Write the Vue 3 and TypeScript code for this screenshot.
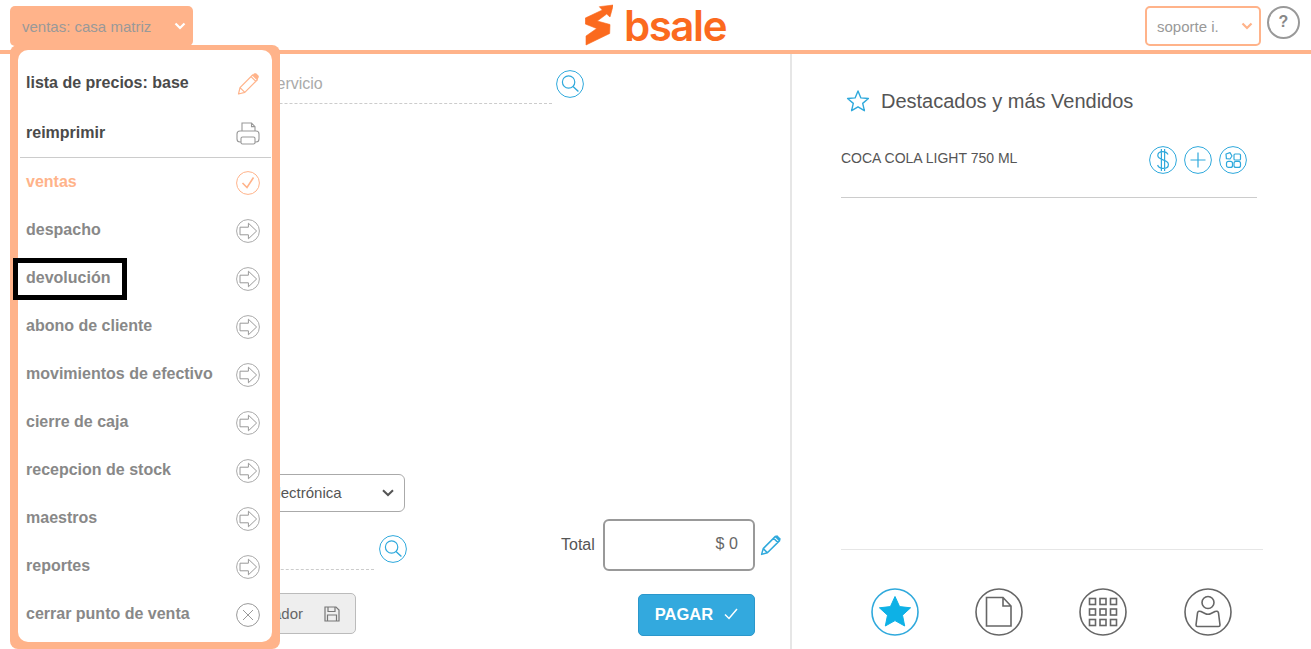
<template>
  <div class="pos">
    <header class="topbar">
      <div class="topbar-left">
        <button class="branch-btn">
          <span>ventas: casa matriz</span>
          <svg class="chev" viewBox="0 0 12 8" width="12" height="8">
            <path d="M1.5 1.5 L6 6 L10.5 1.5" fill="none" stroke="#fff" stroke-width="2.2" />
          </svg>
        </button>
      </div>
      <div class="logo">
        <svg viewBox="0 0 28 42" width="28" height="42">
          <path
            d="M14.3 2.7 L28.3 1 L25 13 L21.7 10 L12.3 17 L25 20.5 L24.7 29.5 L1 41 L1 32 L11.7 24.5 L0.3 20 L0.3 14 L17.3 6 Z"
            fill="#fb6a1e"
            stroke="#fb6a1e"
            stroke-width="0.6"
            stroke-linejoin="round"
          />
        </svg>
        <span class="logo-text">bsale</span>
      </div>
      <div class="topbar-right">
        <div class="user-select">
          <span>soporte i.</span>
          <svg viewBox="0 0 12 8" width="12" height="8">
            <path d="M1.5 1.5 L6 6 L10.5 1.5" fill="none" stroke="#ffb38a" stroke-width="2.2" />
          </svg>
        </div>
        <div class="help">?</div>
      </div>
    </header>

    <main class="body">
      <section class="sale">
        <div class="search-row">
          <input class="search-input" placeholder="buscar producto o servicio" readonly />
          <svg class="round-icon" viewBox="0 0 28 28" width="28" height="28">
            <circle cx="14" cy="14" r="13.4" fill="none" stroke="#2fa9dc" />
            <circle cx="12.6" cy="12" r="6.2" fill="none" stroke="#2fa9dc" stroke-width="1.2" />
            <path d="M17 16.6 L22.4 21.6" stroke="#2fa9dc" stroke-width="1.4" />
          </svg>
        </div>

        <div class="sale-bottom">
          <div class="doc-col">
            <div class="doc-select">
              <span class="doc-name">boleta electrónica</span>
              <svg viewBox="0 0 12 8" width="12" height="8">
                <path d="M1 1.2 L6 6 L11 1.2" fill="none" stroke="#555" stroke-width="2" />
              </svg>
            </div>
            <div class="client-row">
              <div class="client-input"></div>
              <svg class="round-icon" viewBox="0 0 28 28" width="28" height="28">
                <circle cx="14" cy="14" r="13.4" fill="none" stroke="#2fa9dc" />
                <circle cx="12.6" cy="12" r="6.2" fill="none" stroke="#2fa9dc" stroke-width="1.2" />
                <path d="M17 16.6 L22.4 21.6" stroke="#2fa9dc" stroke-width="1.4" />
              </svg>
            </div>
            <button class="save-btn">
              <span>comprador</span>
              <svg viewBox="0 0 16 16" width="16" height="16">
                <path d="M1 1 H12 L15 4 V15 H1 Z" fill="#eee" stroke="#777" stroke-width="1.2" />
                <path d="M4 1 V5.5 H11 V1 M3.5 15 V9 H12.5 V15" fill="none" stroke="#777" stroke-width="1.2" />
              </svg>
            </button>
          </div>

          <div class="pay-col">
            <div class="total-row">
              <span class="total-label">Total</span>
              <div class="total-box">$ 0</div>
              <svg class="total-pencil" viewBox="0 0 22 22" width="22" height="22">
                <path d="M1.6 20.4 L3.2 14.6 L15.4 2.4 L19.6 6.6 L7.4 18.8 Z M3.2 14.6 L7.4 18.8 M13.6 4.2 L17.8 8.4" fill="none" stroke="#2fa9dc" stroke-width="1.5" stroke-linejoin="round" />
                <path d="M15.4 2.4 L17 0.9 L21 5 L19.6 6.6 Z" fill="#2fa9dc" />
              </svg>
            </div>
            <button class="pay-btn">
              <span>PAGAR</span>
              <svg viewBox="0 0 14 12" width="14" height="12">
                <path d="M1 6.5 L5 10.5 L13 1" fill="none" stroke="#fff" stroke-width="1.5" />
              </svg>
            </button>
          </div>
        </div>
      </section>

      <section class="side">
        <div class="side-title">
          <svg viewBox="0 0 24 24" width="24" height="24">
            <path d="M12 2 L14.9 8.9 L22.4 9.5 L16.7 14.4 L18.4 21.7 L12 17.8 L5.6 21.7 L7.3 14.4 L1.6 9.5 L9.1 8.9 Z" fill="none" stroke="#2fa9dc" stroke-width="1.4" stroke-linejoin="round" />
          </svg>
          <h2>Destacados y más Vendidos</h2>
        </div>

        <div class="product">
          <span class="product-name">COCA COLA LIGHT 750 ML</span>
          <div class="product-actions">
            <svg viewBox="0 0 28 28" width="28" height="28">
              <circle cx="14" cy="14" r="13.4" fill="none" stroke="#2fa9dc" />
              <path d="M19 8.6 C18 6.2 15.8 5.6 13.8 5.6 C10.8 5.6 8.8 7.2 8.8 9.6 C8.8 15 19.4 12.6 19.4 18.4 C19.4 21 17 22.4 14 22.4 C11.4 22.4 9.4 21.2 8.6 19 M12.4 3 V25 M15.6 3 V25" fill="none" stroke="#2fa9dc" stroke-width="1.2" />
            </svg>
            <svg viewBox="0 0 28 28" width="28" height="28">
              <circle cx="14" cy="14" r="13.4" fill="none" stroke="#2fa9dc" />
              <path d="M14 6.5 V21.5 M6.5 14 H21.5" stroke="#2fa9dc" stroke-width="1.2" />
            </svg>
            <svg viewBox="0 0 28 28" width="28" height="28">
              <circle cx="14" cy="14" r="13.4" fill="none" stroke="#2fa9dc" />
              <path d="M7 8 L11 6.6 L13 10 L11 13 L7.4 12.6 Z" fill="none" stroke="#2fa9dc" stroke-width="1.2" stroke-linejoin="round" />
              <rect x="15" y="8" width="6.5" height="6" rx="1" fill="none" stroke="#2fa9dc" stroke-width="1.2" />
              <rect x="7.5" y="15.4" width="6" height="6" rx="2" fill="none" stroke="#2fa9dc" stroke-width="1.2" />
              <rect x="15" y="15.4" width="6.5" height="6" rx="2" fill="none" stroke="#2fa9dc" stroke-width="1.2" />
            </svg>
          </div>
        </div>

        <nav class="side-nav">
          <svg viewBox="0 0 48 48" width="48" height="48">
            <circle cx="24" cy="24" r="23" fill="none" stroke="#2fa9dc" stroke-width="1.6" />
            <path d="M24 8.5 L28.6 18.6 L39.6 19.8 L31.5 27.2 L33.7 38 L24 32.6 L14.3 38 L16.5 27.2 L8.4 19.8 L19.4 18.6 Z" fill="#0db1e6" stroke="#0db1e6" stroke-linejoin="round" />
          </svg>
          <svg viewBox="0 0 48 48" width="48" height="48">
            <circle cx="24" cy="24" r="23" fill="none" stroke="#666" stroke-width="1.6" />
            <path d="M11.5 9.5 H28 L36 18 V38 H11.5 Z M28 9.5 V18 H36" fill="none" stroke="#666" stroke-width="1.6" />
          </svg>
          <svg viewBox="0 0 48 48" width="48" height="48">
            <circle cx="24" cy="24" r="23" fill="none" stroke="#666" stroke-width="1.6" />
            <g fill="none" stroke="#666" stroke-width="1.6">
              <rect v-for="c in gridCells" :key="c.k" :x="c.x" :y="c.y" width="6" height="6" />
            </g>
          </svg>
          <svg viewBox="0 0 48 48" width="48" height="48">
            <circle cx="24" cy="24" r="23" fill="none" stroke="#666" stroke-width="1.6" />
            <circle cx="24" cy="14.5" r="6" fill="none" stroke="#666" stroke-width="1.6" />
            <path d="M13.5 25 C14 23 15.5 23 17 23.5 L21 25.5 C23 26.5 25 26.5 27 25.5 L31 23.5 C32.5 23 34 23 34.5 25 L36 37 C36 38 35.5 38.5 34.5 38.5 H13.5 C12.5 38.5 12 38 12 37 Z" fill="none" stroke="#666" stroke-width="1.6" stroke-linejoin="round" />
          </svg>
        </nav>
      </section>
    </main>

    <aside class="menu">
      <div class="menu-inner">
        <div v-for="item in menuItems" :key="item.label" class="menu-item" :class="item.kind">
          <span>{{ item.label }}</span>
          <svg v-if="item.icon === 'pencil'" viewBox="0 0 24 24" width="24" height="24">
            <path d="M2.5 22 L4 15.6 L16.6 3 L21.4 7.8 L8.8 20.4 Z M4 15.6 L8.8 20.4 M15 4.6 L19.8 9.4" fill="none" stroke="#ffb38a" stroke-width="1.2" stroke-linejoin="round" />
            <path d="M16.6 3 L18 1.6 C18.8 1 19.6 1 20.4 1.6 L22.4 3.6 C23 4.4 23 5.2 22.4 6 L21.4 7.8 Z" fill="#ffb38a" />
          </svg>
          <svg v-else-if="item.icon === 'print'" viewBox="0 0 24 24" width="24" height="24">
            <path d="M6 11 V1 H15.5 L19 4.6 V11 M15.5 1 V4.6 H19" fill="none" stroke="#999" stroke-width="1.1" />
            <rect x="1" y="9" width="22" height="11" rx="3" fill="#fff" stroke="#999" stroke-width="1.1" />
            <rect x="5" y="15" width="14" height="7" rx="1.6" fill="#fff" stroke="#999" stroke-width="1.1" />
          </svg>
          <svg v-else-if="item.icon === 'check'" viewBox="0 0 24 24" width="24" height="24">
            <circle cx="12" cy="12" r="11.4" fill="none" stroke="#ffb38a" />
            <path d="M6.5 12 L11 16.5 L17.5 6.5" fill="none" stroke="#ffb38a" stroke-width="1.6" />
          </svg>
          <svg v-else-if="item.icon === 'arrow'" viewBox="0 0 24 24" width="24" height="24">
            <circle cx="12" cy="12" r="11.4" fill="none" stroke="#aaa" />
            <path d="M4 8.2 H12.4 V4.2 L20.6 12 L12.4 19.8 V15.8 H4 Z" fill="none" stroke="#999" stroke-linejoin="round" />
          </svg>
          <svg v-else viewBox="0 0 24 24" width="24" height="24">
            <circle cx="12" cy="12" r="11.4" fill="none" stroke="#999" />
            <path d="M7 7 L17 17 M17 7 L7 17" stroke="#999" />
          </svg>
        </div>
      </div>
    </aside>

    <div class="focus-box"></div>
  </div>
</template>

<script setup lang="ts">
interface MenuItem {
  label: string
  icon: 'pencil' | 'print' | 'check' | 'arrow' | 'close'
  kind: string
}

const menuItems: MenuItem[] = [
  { label: 'lista de precios: base', icon: 'pencil', kind: 'tool' },
  { label: 'reimprimir', icon: 'print', kind: 'tool last-tool' },
  { label: 'ventas', icon: 'check', kind: 'current' },
  { label: 'despacho', icon: 'arrow', kind: '' },
  { label: 'devolución', icon: 'arrow', kind: '' },
  { label: 'abono de cliente', icon: 'arrow', kind: '' },
  { label: 'movimientos de efectivo', icon: 'arrow', kind: '' },
  { label: 'cierre de caja', icon: 'arrow', kind: '' },
  { label: 'recepcion de stock', icon: 'arrow', kind: '' },
  { label: 'maestros', icon: 'arrow', kind: '' },
  { label: 'reportes', icon: 'arrow', kind: '' },
  { label: 'cerrar punto de venta', icon: 'close', kind: '' }
]

const gridCells = [0, 1, 2].flatMap((r) =>
  [0, 1, 2].map((c) => ({ k: `${r}-${c}`, x: 10.5 + c * 10.5, y: 10.5 + r * 10.5 }))
)
</script>

<style>
html,
body {
  margin: 0;
  background: #fff;
}
</style>

<style scoped>
.pos {
  position: relative;
  width: 1311px;
  height: 649px;
  overflow: hidden;
  display: flex;
  flex-direction: column;
  font-family: "Liberation Sans", Arial, sans-serif;
  color: #555;
}

button {
  font-family: inherit;
  padding: 0;
  cursor: pointer;
}

.topbar {
  height: 50px;
  border-bottom: 4px solid #ffb38a;
  display: grid;
  grid-template-columns: 1fr auto 1fr;
  align-items: start;
  flex: none;
}

.branch-btn {
  margin: 6px 0 0 10px;
  width: 183px;
  height: 40px;
  border: 0;
  border-radius: 5px;
  background: #ffb38a;
  color: #999;
  font-size: 15px;
  display: flex;
  align-items: center;
  justify-content: space-between;
  padding: 0 7px 0 12px;
}

.logo {
  display: flex;
  align-items: flex-start;
  gap: 11px;
  margin-top: 4px;
}

.logo-text {
  font-family: Inter, sans-serif;
  font-weight: 600;
  font-size: 42px;
  line-height: 44px;
  color: #fb6a1e;
  letter-spacing: -1.4px;
}

.topbar-right {
  display: flex;
  justify-content: flex-end;
  padding: 6px 11px 0 0;
  gap: 6px;
}

.user-select {
  width: 116px;
  height: 40px;
  box-sizing: border-box;
  border: 2px solid #ffb38a;
  border-radius: 5px;
  display: flex;
  align-items: center;
  justify-content: space-between;
  padding: 0 6px 0 10px;
  font-size: 15px;
  color: #999;
}

.help {
  width: 33px;
  height: 33px;
  box-sizing: border-box;
  border: 2px solid #999;
  border-radius: 50%;
  text-align: center;
  font-weight: bold;
  font-size: 16px;
  line-height: 28px;
  color: #888;
}

.body {
  flex: 1;
  display: flex;
  min-height: 0;
}

.sale {
  width: 790px;
  box-sizing: border-box;
  padding: 16px 8px 13px 30px;
  display: flex;
  flex-direction: column;
  justify-content: space-between;
}

.search-row {
  display: flex;
  align-items: flex-start;
  gap: 4px;
}

.search-input {
  width: 522px;
  height: 34px;
  box-sizing: border-box;
  border: 0;
  border-bottom: 1px dashed #ccc;
  outline: 0;
  padding: 0 0 6px 106px;
  font-family: inherit;
  font-size: 16px;
  color: #555;
}

.search-input::placeholder {
  color: #aaa;
  opacity: 1;
}

.round-icon {
  flex: none;
}

.sale-bottom {
  display: flex;
  justify-content: space-between;
}

.doc-col {
  width: 377px;
  display: flex;
  flex-direction: column;
  align-items: flex-start;
  padding-bottom: 2px;
}

.doc-select {
  width: 375px;
  height: 38px;
  box-sizing: border-box;
  border: 1px solid #aaa;
  border-radius: 6px;
  display: flex;
  align-items: center;
  justify-content: space-between;
  padding: 0 10px 0 193px;
  font-size: 15px;
  color: #555;
}

.doc-name {
  margin-top: -2px;
}

.client-row {
  display: flex;
  align-items: flex-start;
  gap: 5px;
  margin-top: 23px;
}

.client-input {
  width: 344px;
  height: 34px;
  border-bottom: 1px dashed #ccc;
}

.save-btn {
  margin-top: 23px;
  width: 326px;
  height: 41px;
  box-sizing: border-box;
  border: 1px solid #bbb;
  border-radius: 5px;
  background: #eee;
  color: #666;
  font-size: 15px;
  display: flex;
  align-items: center;
  justify-content: flex-end;
  gap: 21px;
  padding-right: 15px;
}

.pay-col {
  width: 221px;
  display: flex;
  flex-direction: column;
  align-self: flex-end;
}

.total-row {
  display: flex;
  align-items: center;
}

.total-label {
  font-size: 16px;
  color: #555;
  margin-right: 8px;
}

.total-box {
  width: 152px;
  height: 52px;
  box-sizing: border-box;
  border: 2px solid #999;
  border-radius: 6px;
  text-align: right;
  padding: 14px 15px 0 0;
  font-size: 16px;
  line-height: 18px;
  color: #666;
}

.total-pencil {
  margin-left: 5px;
}

.pay-btn {
  margin: 23px 0 0 77px;
  width: 117px;
  height: 42px;
  border: 1px solid #2b97cb;
  border-radius: 5px;
  background: #33a9de;
  color: #fff;
  font-size: 16.5px;
  font-weight: bold;
  display: flex;
  align-items: center;
  justify-content: center;
  gap: 11px;
  padding-bottom: 2px;
}

.side {
  flex: 1;
  border-left: 2px solid #e6e6e6;
  padding: 33px 0 13px 49px;
  display: flex;
  flex-direction: column;
}

.side-title {
  display: flex;
  align-items: center;
  gap: 11px;
  margin-left: 5px;
  height: 28px;
}

.side-title h2 {
  margin: 0;
  font-size: 20px;
  font-weight: normal;
  color: #555;
}

.product {
  width: 416px;
  margin-top: 31px;
  padding: 0 10px 23px 0;
  box-sizing: border-box;
  border-bottom: 1px solid #ccc;
  display: flex;
  justify-content: space-between;
  align-items: flex-start;
}

.product-name {
  font-size: 14px;
  line-height: 16px;
  margin-top: 4px;
  color: #555;
}

.product-actions {
  display: flex;
  gap: 7px;
}

.side-nav {
  margin-top: auto;
  width: 422px;
  box-sizing: border-box;
  border-top: 1px solid #e6e6e6;
  padding: 38px 0 0 30px;
  display: flex;
  gap: 56px;
}

.side-nav svg:last-child {
  margin-left: 1px;
}

.menu {
  position: absolute;
  left: 10px;
  top: 45px;
  width: 270px;
  height: 604px;
  box-sizing: border-box;
  background: #ffb38a;
  border-radius: 8px;
  padding: 5px 8px 7px;
}

.menu-inner {
  height: 100%;
  background: #fff;
  border-radius: 10px;
  padding-top: 8px;
  box-sizing: border-box;
}

.menu-item {
  height: 48px;
  display: flex;
  align-items: center;
  justify-content: space-between;
  padding: 0 12px 0 8px;
  font-size: 16px;
  font-weight: bold;
  color: #888;
}

.menu-item svg {
  margin-top: 2px;
}

.menu-item.tool {
  height: 50px;
  color: #4a4a4a;
}

.menu-item.last-tool {
  position: relative;
  border-bottom: 1px solid #ccc;
  margin: 0 1px 0 2px;
  padding: 0 11px 0 6px;
  box-sizing: content-box;
  height: 49px;
}

.menu-item.current {
  color: #ffb38a;
}

.focus-box {
  position: absolute;
  left: 13px;
  top: 258px;
  width: 104px;
  height: 32px;
  border: 5px solid #000;
}
</style>
